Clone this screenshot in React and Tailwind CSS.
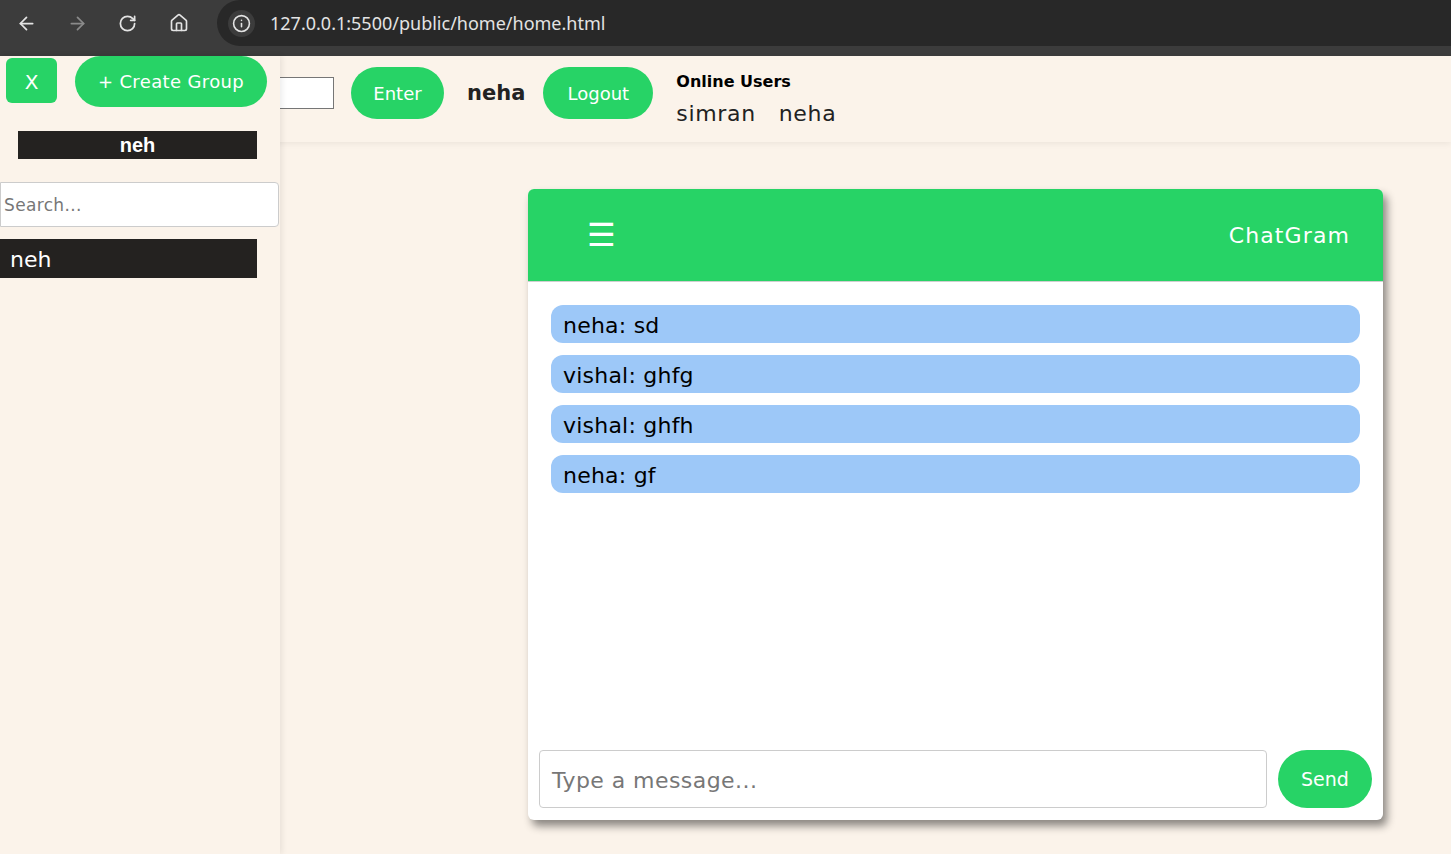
import React from 'react';
import { ArrowLeft, ArrowRight, RotateCw, House, Info } from 'lucide-react';

const font = { fontFamily: '"DejaVu Sans", "Open Sans", sans-serif' };

const messages = ['neha: sd', 'vishal: ghfg', 'vishal: ghfh', 'neha: gf'];

const BrowserBar = () => (
  <div className="h-[56px] bg-[#3c3c3c] flex items-start">
    <div className="w-[217px] h-[46px] flex items-center text-[#e3e3e3]">
      <ArrowLeft className="ml-[16px]" size={21} strokeWidth={2} />
      <ArrowRight className="ml-[30px] text-[#8a8a8a]" size={21} strokeWidth={2} />
      <RotateCw className="ml-[30px]" size={19} strokeWidth={2.2} />
      <House className="ml-[32px]" size={20} strokeWidth={2} />
    </div>
    <div className="flex-1 h-[46px] bg-[#282828] rounded-l-full flex items-center">
      <div className="ml-[11px] w-[27px] h-[27px] rounded-full bg-[#3c3c3c] flex items-center justify-center text-[#e3e3e3]">
        <Info size={19} strokeWidth={2} />
      </div>
      <span
        className="ml-[15px] text-[18px] text-[#e3e3e3]"
        style={{ fontFamily: '"Noto Sans", "Open Sans", sans-serif' }}
      >
        127.0.0.1:5500/public/home/home.html
      </span>
    </div>
  </div>
);

const Sidebar = () => (
  <div className="absolute left-0 top-0 z-10 w-[280px] h-full bg-[#fbf3ea] shadow-[2px_0_6px_rgba(0,0,0,0.08)]">
    <div className="flex items-start">
      <button className="ml-[6px] mt-[2px] w-[51px] h-[45px] pt-[2px] rounded-md bg-[#27d366] text-white text-[20px]">
        X
      </button>
      <button className="ml-[18px] w-[192px] h-[51px] rounded-full bg-[#27d366] text-white text-[18px] tracking-[0.02em]">
        + Create Group
      </button>
    </div>
    <div
      className="ml-[18px] mt-[24px] w-[239px] h-[28px] bg-[#242220] text-white text-[20px] font-bold flex items-center justify-center"
      style={{ fontFamily: '"Liberation Sans", Arial, sans-serif' }}
    >
      neh
    </div>
    <div className="mt-[23px] w-[279px] h-[45px] pt-[3px] bg-white border border-[#cccccc] rounded-r-[4px] flex items-center">
      <span className="ml-[3px] text-[17px] tracking-[0.02em] text-[#777777]">Search...</span>
    </div>
    <div className="mt-[12px] w-[257px] h-[39px] pt-[2px] bg-[#242220] text-white text-[22px] flex items-center pl-[10px]">
      neh
    </div>
  </div>
);

const Header = () => (
  <div className="h-[86px] flex items-start shadow-[0_2px_6px_rgba(0,0,0,0.06)]">
    <div className="ml-[184px] mt-[21px] w-[150px] h-[32px] bg-white border border-[#767676]"></div>
    <button className="ml-[17px] mt-[11px] w-[93px] h-[52px] rounded-full bg-[#27d366] text-white text-[18px]">
      Enter
    </button>
    <span className="ml-[23px] mt-[22px] text-[21px] font-bold text-[#222222]">neha</span>
    <button className="ml-[18px] mt-[11px] w-[110px] h-[52px] rounded-full bg-[#27d366] text-white text-[18px]">
      Logout
    </button>
    <div className="ml-[23px] mt-[14px] flex flex-col">
      <span className="text-[16px] font-bold text-black leading-[24px]">Online Users</span>
      <div className="flex gap-[23px] text-[22px] tracking-[0.03em] text-[#222222] leading-[40px]">
        <span>simran</span>
        <span>neha</span>
      </div>
    </div>
  </div>
);

const ChatCard = () => (
  <div className="ml-[528px] mt-[47px] w-[855px] h-[631px] bg-white rounded-md shadow-[4px_6px_8px_rgba(0,0,0,0.45)] flex flex-col overflow-hidden">
    <div className="h-[93px] bg-[#27d366] border-b border-[#cfcfcf] flex items-center justify-between px-[33px]">
      <span className="ml-[26px] text-white text-[32px] leading-none">☰</span>
      <span className="text-white text-[22px] tracking-[0.05em]">ChatGram</span>
    </div>
    <div className="flex-1 px-[23px] pt-[23px] flex flex-col gap-[12px]">
      {messages.map((m, i) => (
        <div key={i} className="h-[38px] pt-[3px] rounded-[12px] bg-[#9dc8f8] flex items-center px-[12px] text-[22px] tracking-[0.01em] text-black">
          {m}
        </div>
      ))}
    </div>
    <div className="flex items-center px-[11px] pb-[12px] gap-[11px]">
      <div className="flex-1 h-[58px] pt-[3px] border border-[#cccccc] rounded-[4px] flex items-center pl-[12px]">
        <span className="text-[22px] tracking-[0.02em] text-[#777777]">Type a message...</span>
      </div>
      <button className="w-[94px] h-[58px] rounded-full bg-[#27d366] text-white text-[19px]">
        Send
      </button>
    </div>
  </div>
);

export default function App() {
  return (
    <div className="w-[1451px] h-[854px] overflow-hidden bg-[#fbf3ea]" style={font}>
      <BrowserBar />
      <div className="relative h-[798px]">
        <Sidebar />
        <Header />
        <ChatCard />
      </div>
    </div>
  );
}
